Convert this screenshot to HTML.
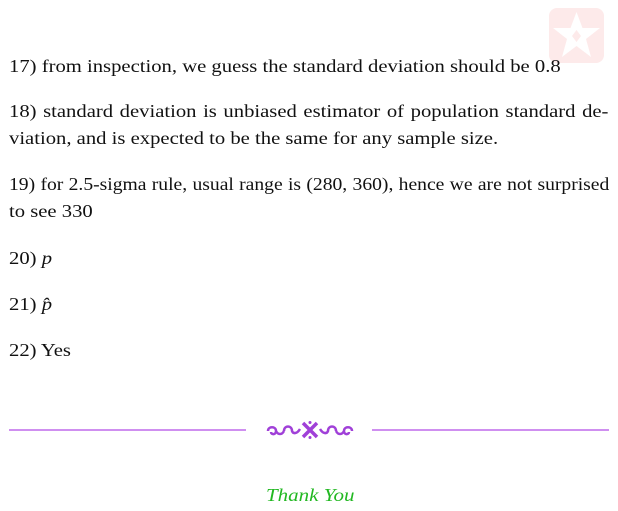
<!DOCTYPE html>
<html><head><style>
body{margin:0;width:618px;height:511px;background:#fff;position:relative;font-family:"Liberation Serif",serif;font-size:17.5px;color:#111;overflow:hidden}
.p{position:absolute;left:9px;width:508px;line-height:27px;white-space:nowrap;transform:scaleX(1.18);transform-origin:0 0}
.j{text-align:justify;text-align-last:justify}
i{font-style:italic}
.hr{position:absolute;top:429px;height:1.5px;background:#cf8ff0}
</style></head><body>
<svg style="position:absolute;left:549px;top:8px" width="55" height="55" viewBox="0 0 55 55">
<rect width="55" height="55" rx="8" fill="#fdeaea"/>
<polygon points="27.5,4 33.5,20 51,20 37,31 42,49 27.5,38 13,49 18,31 4,20 21.5,20" fill="#fff"/>
<polygon points="27.5,22 32,28 27.5,34 23,28" fill="#fdeaea"/>
</svg>
<div class="p" style="top:53px">17) from inspection, we guess the standard deviation should be 0.8</div>
<div class="p j" style="top:98px">18) standard deviation is unbiased estimator of population standard de-</div>
<div class="p" style="top:125px">viation, and is expected to be the same for any sample size.</div>
<div class="p j" style="top:171px;transform:scaleX(1.12);width:536px">19) for 2.5-sigma rule, usual range is (280, 360), hence we are not surprised</div>
<div class="p" style="top:198px">to see 330</div>
<div class="p" style="top:245px">20) <i>p</i></div>
<div class="p" style="top:291px">21) <i>p̂</i></div>
<div class="p" style="top:337px">22) Yes</div>
<div class="hr" style="left:9px;width:237px"></div>
<div class="hr" style="left:372px;width:237px"></div>
<svg style="position:absolute;left:265px;top:420px" width="90" height="20" viewBox="0 0 90 20" fill="none" stroke="#a040d8" stroke-width="2.5">
<path d="M3,11 c0,-5 8,-5 8,0 c0,4 -5,4 -5,1 M11,11 c2,4 6,4 8,0"/>
<path d="M19,11 c0,-6 8,-6 8,0 c1,3 5,3 8,-2"/>
<path d="M87,11 c0,-5 -8,-5 -8,0 c0,4 5,4 5,1 M79,11 c-2,4 -6,4 -8,0"/>
<path d="M71,11 c0,-6 -8,-6 -8,0 c-1,3 -5,3 -8,-2"/>
<path d="M38,3 L52,17 M52,3 L38,17" stroke-width="3.5"/>
<circle cx="45" cy="2.5" r="1.5" fill="#a040d8" stroke="none"/>
<circle cx="45" cy="17.5" r="1.5" fill="#a040d8" stroke="none"/>
<circle cx="45" cy="10" r="2" fill="#a040d8" stroke="none"/>
</svg>
<div style="position:absolute;left:266px;top:485px;color:#22b822;font-style:italic;font-size:17.5px;transform:scaleX(1.2);transform-origin:0 0;white-space:nowrap">Thank You</div>
</body></html>
